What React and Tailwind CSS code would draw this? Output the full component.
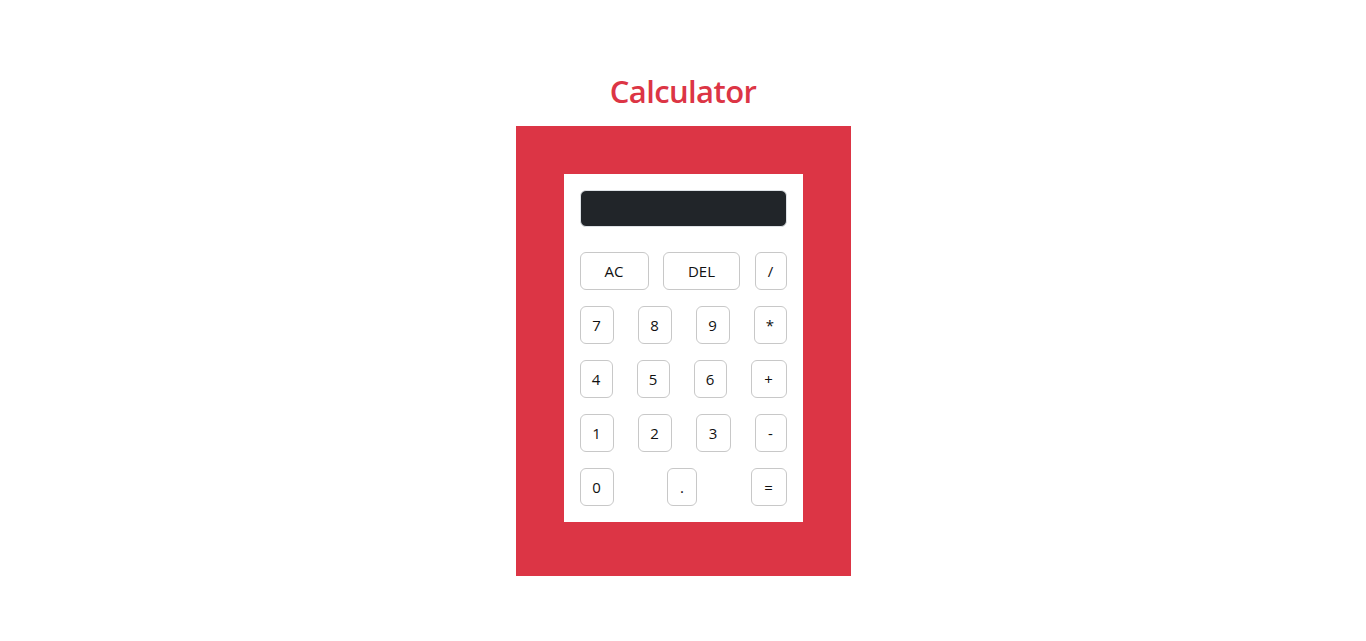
export default function App() {
  const rows = [
    [["AC", "w-[69px]"], ["DEL", "w-[77px]"], ["/", "w-[32px]"]],
    [["7", "w-[34px]"], ["8", "w-[34px]"], ["9", "w-[34px]"], ["*", "w-[33px]"]],
    [["4", "w-[33px]"], ["5", "w-[33px]"], ["6", "w-[33px]"], ["+", "w-[36px]"]],
    [["1", "w-[34px]"], ["2", "w-[34px]"], ["3", "w-[35px]"], ["-", "w-[32px]"]],
    [["0", "w-[34px]"], [".", "w-[30px]"], ["=", "w-[36px]"]],
  ];
  return (
    <div
      className="min-h-[641px] bg-white flex flex-col items-center pt-[72px]"
      style={{ fontFamily: '"Open Sans", "Noto Sans", sans-serif' }}
    >
      <h2 className="text-[31px] leading-[38px] font-semibold text-[#dc3545] mb-4 tracking-[-0.6px]">
        Calculator
      </h2>
      <div className="w-[335px] h-[450px] bg-[#dc3545] p-12">
        <div className="bg-white p-4 flex flex-col gap-4">
          <div className="h-[37px] mb-[9px] bg-[#212529] rounded-md border border-[#dee2e6]" />
          {rows.map((row, i) => (
            <div key={i} className="flex justify-between">
              {row.map(([label, w]) => (
                <button
                  key={label}
                  className={`${w} h-[38px] border border-[#c8c8c8] rounded-md bg-white text-[15px] text-[#111] flex items-center justify-center`}
                >
                  {label}
                </button>
              ))}
            </div>
          ))}
        </div>
      </div>
    </div>
  );
}
